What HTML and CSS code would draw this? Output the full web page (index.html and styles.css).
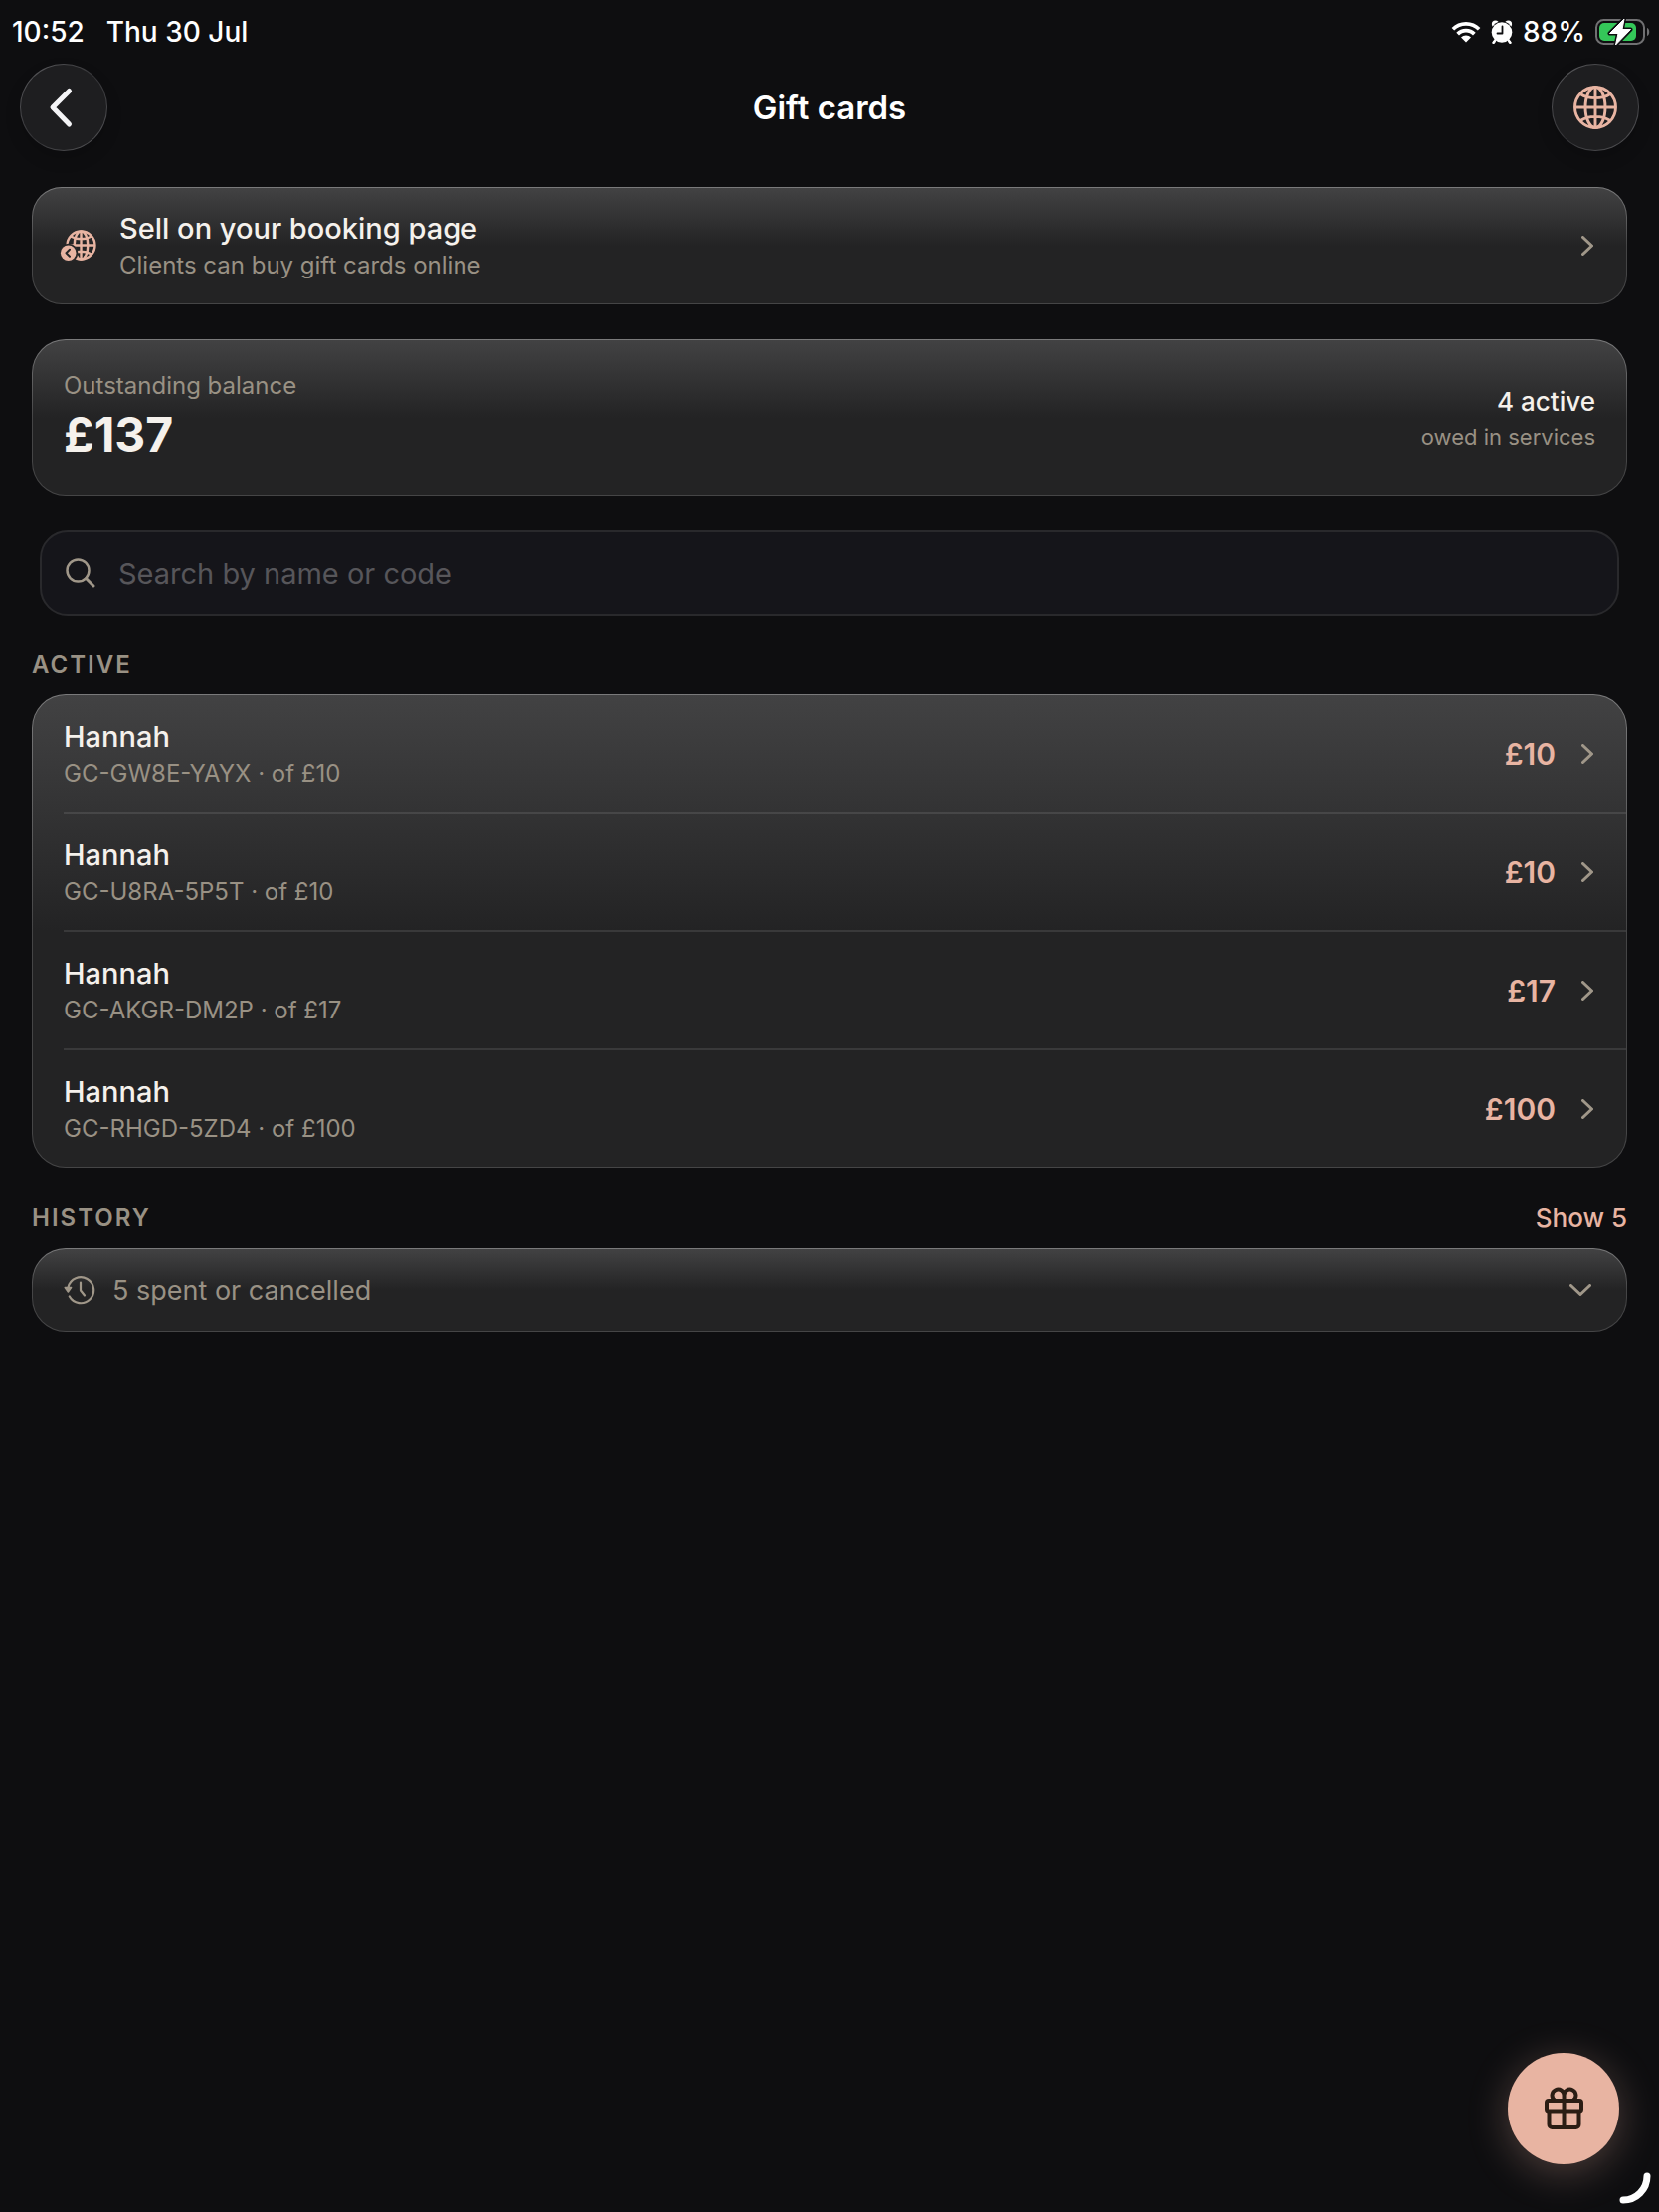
FILE: index.html
```html
<!DOCTYPE html>
<html lang="en">

<head>
    <meta charset="UTF-8">
    <meta name="viewport" content="width=device-width, initial-scale=1.0">
    <title>Gift cards</title>
    <link rel="stylesheet" href="styles.css">
</head>

<body>
    <div class="status">
        <span>10:52</span>
        <span>Thu 30 Jul</span>
        <div class="status-right">
            <svg class="wifi" width="30" height="22" viewBox="0 0 30 22" fill="#fff">
                <path d="M15 1C9.300 1 4.300 3.200.600 6.900L3.200 9.600C6.300 6.500 10.400 4.800 15 4.800s8.700 1.700 11.800 4.800l2.600-2.700C25.700 3.200 20.700 1 15 1z" />
                <path d="M15 7.800c-3.800 0-7.200 1.500-9.700 4l2.700 2.700c1.800-1.800 4.300-2.900 7-2.900s5.200 1.100 7 2.900l2.700-2.700c-2.500-2.500-5.900-4-9.700-4z" />
                <path d="M15 14.500c-2 0-3.700.8-5 2l5 5 5-5c-1.300-1.200-3-2-5-2z" />
            </svg>
            <svg class="alarm" width="22" height="24" viewBox="0 0 22 24">
                <circle cx="4.500" cy="4" r="3.600" fill="#fff" />
                <circle cx="17.500" cy="4" r="3.600" fill="#fff" />
                <path d="M5 20l-2.500 3M17 20l2.500 3" stroke="#fff" stroke-width="2.200" stroke-linecap="round" />
                <circle cx="11" cy="12.500" r="11" fill="#0e0e10" />
                <circle cx="11" cy="12.500" r="10.300" fill="#fff" />
                <path d="M4.200 20.500l-1.500 2M17.800 20.500l1.500 2" stroke="#fff" stroke-width="2.200" stroke-linecap="round" />
                <path d="M11.500 6.500v7H6.500" fill="none" stroke="#0e0e10" stroke-width="1.800" stroke-linecap="round" stroke-linejoin="round" />
            </svg>
            <span>88%</span>
            <svg class="battery" width="56" height="28" viewBox="0 0 56 28">
                <rect x="1" y="2" width="48" height="24" rx="7.500" fill="none" stroke="#707072" stroke-width="2" />
                <path d="M52 10c3 .8 3 7.200 0 8z" fill="#707072" />
                <rect x="4" y="5" width="37" height="18" rx="5" fill="#34c759" />
                <path d="M29 1L14.500 15.500h8.500L20.500 27 35.500 11.500H27z" fill="#fff" stroke="#0e0e10" stroke-width="4" stroke-linejoin="round" />
                <path d="M29 1L14.500 15.500h8.500L20.500 27 35.500 11.500H27z" fill="#fff" stroke="#fff" stroke-width="1" stroke-linejoin="round" />
            </svg>
        </div>
    </div>

    <header class="topbar">
        <button class="round" type="button" aria-label="Back">
            <svg width="86" height="86" viewBox="0 0 86 86" fill="none" stroke="#f4f4f6" stroke-width="5" stroke-linecap="round" stroke-linejoin="round">
                <path d="M48.500 26.500L32 43l16.500 17" />
            </svg>
        </button>
        <h1>Gift cards</h1>
        <button class="round" type="button" aria-label="Booking page">
            <svg width="44" height="44" viewBox="0 0 44 44" fill="none" stroke="#e8b4a2" stroke-width="2.900">
                <circle cx="22" cy="22" r="20.500" />
                <ellipse cx="22" cy="22" rx="10" ry="20.500" />
                <path d="M22 1.500v41M1.500 22h41M7 8.500c8 5.500 22 5.500 30 0M7 35.500c8-5.500 22-5.500 30 0" />
            </svg>
        </button>
    </header>

    <main>
        <a class="card sell" href="#">
            <svg class="globe" width="38" height="34" viewBox="0 0 38 34" fill="none" stroke="#e8b4a2" stroke-width="2.400">
                <circle cx="22.500" cy="16.500" r="14" />
                <ellipse cx="22.500" cy="16.500" rx="6.800" ry="14" />
                <path d="M22.500 2.500v28M8.500 16.500h28M12 7.500c6 3.600 15 3.600 21 0M12 25.500c6-3.600 15-3.600 21 0" />
                <circle cx="9.700" cy="24.300" r="9.600" fill="#262627" stroke="none" />
                <circle cx="9.700" cy="24.300" r="7.800" fill="#e8b4a2" stroke="none" />
                <path d="M11 20.800l-3.500 3.500 3.500 3.500" stroke="#262627" stroke-width="2" stroke-linecap="round" stroke-linejoin="round" />
            </svg>
            <span class="text">
                <span class="name">Sell on your booking page</span>
                <span class="sub">Clients can buy gift cards online</span>
            </span>
            <svg class="chevron" width="12" height="20" viewBox="0 0 12 20"><path d="M1.500 1.500L10.500 10l-9 8.500" /></svg>
        </a>

        <section class="card balance">
            <div class="text">
                <span class="sub">Outstanding balance</span>
                <strong class="total">£137</strong>
            </div>
            <div class="text count">
                <span class="active-count">4 active</span>
                <span class="owed">owed in services</span>
            </div>
        </section>

        <label class="search">
            <svg width="30" height="30" viewBox="0 0 30 30" fill="none" stroke="#a09789" stroke-width="2.500" stroke-linecap="round">
                <circle cx="12.500" cy="12.500" r="11" />
                <path d="M20.500 20.500L28 28" stroke-width="3" />
            </svg>
            <input type="text" placeholder="Search by name or code" aria-label="Search by name or code">
        </label>

        <div class="heading">
            <h2>ACTIVE</h2>
        </div>
        <ul class="card list">
            <li>
                <a class="row" href="#">
                    <span class="text"><span class="name">Hannah</span><span class="sub">GC-GW8E-YAYX · of £10</span></span>
                    <span class="amount">£10</span>
                    <svg class="chevron" width="12" height="20" viewBox="0 0 12 20"><path d="M1.500 1.500L10.500 10l-9 8.500" /></svg>
                </a>
            </li>
            <li>
                <a class="row" href="#">
                    <span class="text"><span class="name">Hannah</span><span class="sub">GC-U8RA-5P5T · of £10</span></span>
                    <span class="amount">£10</span>
                    <svg class="chevron" width="12" height="20" viewBox="0 0 12 20"><path d="M1.500 1.500L10.500 10l-9 8.500" /></svg>
                </a>
            </li>
            <li>
                <a class="row" href="#">
                    <span class="text"><span class="name">Hannah</span><span class="sub">GC-AKGR-DM2P · of £17</span></span>
                    <span class="amount">£17</span>
                    <svg class="chevron" width="12" height="20" viewBox="0 0 12 20"><path d="M1.500 1.500L10.500 10l-9 8.500" /></svg>
                </a>
            </li>
            <li>
                <a class="row" href="#">
                    <span class="text"><span class="name">Hannah</span><span class="sub">GC-RHGD-5ZD4 · of £100</span></span>
                    <span class="amount">£100</span>
                    <svg class="chevron" width="12" height="20" viewBox="0 0 12 20"><path d="M1.500 1.500L10.500 10l-9 8.500" /></svg>
                </a>
            </li>
        </ul>

        <div class="heading">
            <h2>HISTORY</h2>
            <button class="show" type="button">Show 5</button>
        </div>
        <button class="card history" type="button">
            <svg width="32" height="30" viewBox="0 0 32 30" fill="none" stroke="#a09789" stroke-width="2.200" stroke-linecap="round" stroke-linejoin="round">
                <path d="M4.600 12A13 13 0 1 1 5.800 21.500" />
                <path d="M1.200 12.500h6.400L4.400 17z" fill="#a09789" stroke-width="1.500" />
                <path d="M17 7.500v8l4 5" />
            </svg>
            <span>5 spent or cancelled</span>
            <svg class="chevron" width="22" height="12" viewBox="0 0 22 12"><path d="M1.500 1.500L11 10.500l9.500-9" /></svg>
        </button>
    </main>

    <button class="fab" type="button" aria-label="New gift card">
        <svg width="40" height="44" viewBox="0 0 40 44" fill="none" stroke="#2b1d14" stroke-width="4" stroke-linejoin="round">
            <rect x="3" y="14" width="35" height="10.500" rx="2" />
            <path d="M5.500 24.500V38a3 3 0 0 0 3 3h24a3 3 0 0 0 3-3V24.500M20.500 13v28" />
            <path d="M20.500 13.500V9a6 6 0 1 0-9.500 4.500M20.500 9a6 6 0 1 1 9.500 4.500" />
        </svg>
    </button>
    <svg class="corner" width="32" height="32" viewBox="0 0 32 32" fill="none" stroke="#fff" stroke-width="7" stroke-linecap="round">
        <path d="M28 4A24 24 0 0 1 4 28" />
    </svg>
</body>

</html>
```
FILE: styles.css
```css
* {
    padding: 0;
    margin: 0;
    box-sizing: border-box;
}

body {
    min-height: 100vh;
    background: #0e0e10;
    color: #f5f1ec;
    font-family: Inter, "Liberation Sans", sans-serif;
}

button {
    border: none;
    background: none;
    color: inherit;
    font-family: inherit;
    cursor: pointer;
}

a {
    color: inherit;
    text-decoration: none;
}

li {
    list-style: none;
}

svg {
    display: block;
    flex: none;
}

/* status bar */
.status {
    display: flex;
    align-items: center;
    gap: 22px;
    height: 64px;
    padding: 0 8px 0 12px;
    color: #fff;
    font-size: 28px;
    font-weight: 500;
}

.status-right {
    display: flex;
    align-items: center;
    gap: 10px;
    margin-left: auto;
}

/* top bar */
.topbar {
    display: flex;
    align-items: center;
    justify-content: space-between;
    padding: 0 20px;
}

.topbar h1 {
    color: #fff;
    font-size: 33px;
    line-height: 40px;
    font-weight: 600;
}

.round {
    display: flex;
    align-items: center;
    justify-content: center;
    width: 88px;
    height: 88px;
    border: 1px solid transparent;
    border-radius: 50%;
    background: linear-gradient(#1e1e20, #1e1e20) padding-box,
        linear-gradient(135deg, #606063, #343437 50%, #58585b) border-box;
    box-shadow: 0 8px 16px rgba(0, 0, 0, 0.15);
}

/* cards */
main {
    padding: 36px 32px 0;
}

.card {
    border: 1px solid transparent;
    border-radius: 34px;
    background: linear-gradient(#424243, #232324 50%) padding-box,
        linear-gradient(#7a7a7b, #454546 50%) border-box;
}

.text {
    display: flex;
    flex-direction: column;
    gap: 4px;
}

.name {
    font-size: 29px;
    line-height: 36px;
    font-weight: 500;
}

.sub {
    color: #999184;
    font-size: 24px;
    line-height: 30px;
}

.chevron {
    margin-left: auto;
    fill: none;
    stroke: #a09789;
    stroke-width: 3;
    stroke-linecap: round;
    stroke-linejoin: round;
}

.sell {
    display: flex;
    align-items: center;
    gap: 23px;
    padding: 23px 33px 23px 26px;
    border-radius: 30px;
}

.balance {
    display: flex;
    align-items: center;
    justify-content: space-between;
    margin-top: 35px;
    padding: 31px;
}

.total {
    font-size: 48px;
    line-height: 60px;
    font-weight: 700;
}

.count {
    text-align: right;
}

.active-count {
    font-size: 26px;
    line-height: 34px;
    font-weight: 500;
}

.owed {
    color: #999184;
    font-size: 22px;
    line-height: 28px;
}

/* search */
.search {
    display: flex;
    align-items: center;
    gap: 23px;
    height: 86px;
    margin: 34px 8px 0;
    padding: 0 24px;
    border: 2px solid #29292c;
    border-radius: 28px;
    background: #15151a;
}

.search input {
    flex: 1;
    border: none;
    outline: none;
    background: none;
    color: #f5f1ec;
    font-family: inherit;
    font-size: 29px;
}

.search input::placeholder {
    color: #57565a;
    opacity: 1;
}

/* section headings */
.heading {
    display: flex;
    align-items: center;
    justify-content: space-between;
    margin: 35px 0 14px;
}

.heading h2 {
    color: #999184;
    font-size: 24px;
    line-height: 30px;
    font-weight: 600;
    letter-spacing: 2px;
}

.show {
    color: #e8b4a2;
    font-size: 26px;
    line-height: 32px;
    font-weight: 500;
}

/* gift card rows */
.list li {
    padding-left: 31px;
}

.row {
    display: flex;
    align-items: center;
    gap: 26px;
    height: 119px;
    padding-right: 33px;
    border-bottom: 2px solid rgba(255, 255, 255, 0.1);
}

.list li:last-child .row {
    height: 117px;
    border-bottom: none;
}

.amount {
    margin-left: auto;
    color: #e8b4a2;
    font-size: 30px;
    font-weight: 600;
}

.row .chevron {
    margin-left: 0;
}

/* history */
.history {
    display: flex;
    align-items: center;
    gap: 17px;
    width: 100%;
    height: 84px;
    padding: 0 35px 0 31px;
    color: #999184;
    font-size: 27px;
}

/* floating button */
.fab {
    position: fixed;
    right: 40px;
    bottom: 48px;
    display: flex;
    align-items: center;
    justify-content: center;
    width: 112px;
    height: 112px;
    border-radius: 50%;
    background: #e8b4a2;
    box-shadow: 0 8px 40px rgba(232, 180, 162, 0.3);
}

.corner {
    position: fixed;
    right: 8px;
    bottom: 8px;
}
```
